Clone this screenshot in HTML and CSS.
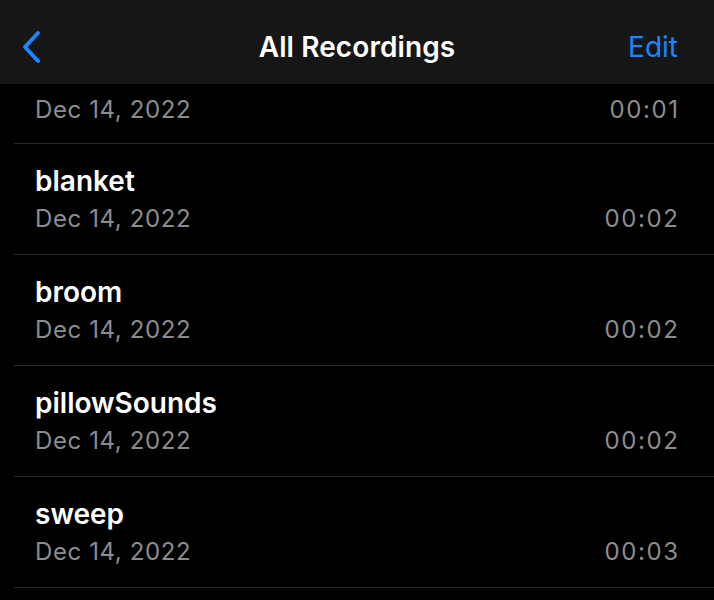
FILE: index.html
```html
<!DOCTYPE html>
<html>
<head>
<meta charset="utf-8">
<link rel="stylesheet" href="styles.css">
</head>
<body>
<div class="screen">
  <header class="navbar">
    <div class="nav-left">
      <svg class="chevron" width="22" height="34" viewBox="0 0 22 34"><path d="M19 3 L6 17 L19 31" fill="none" stroke="#1a86ff" stroke-width="4" stroke-linecap="round" stroke-linejoin="round"/></svg>
    </div>
    <div class="nav-title">All Recordings</div>
    <div class="nav-right">Edit</div>
  </header>
  <ul class="list">
    <li class="row partial">
      <div class="meta"><span class="date">Dec 14, 2022</span><span class="time">00:01</span></div>
    </li>
    <li class="row">
      <div class="name">blanket</div>
      <div class="meta"><span class="date">Dec 14, 2022</span><span class="time">00:02</span></div>
    </li>
    <li class="row">
      <div class="name">broom</div>
      <div class="meta"><span class="date">Dec 14, 2022</span><span class="time">00:02</span></div>
    </li>
    <li class="row">
      <div class="name">pillowSounds</div>
      <div class="meta"><span class="date">Dec 14, 2022</span><span class="time">00:02</span></div>
    </li>
    <li class="row">
      <div class="name">sweep</div>
      <div class="meta"><span class="date">Dec 14, 2022</span><span class="time">00:03</span></div>
    </li>
  </ul>
</div>
</body>
</html>
```
FILE: styles.css
```css
html, body {
  margin: 0;
  padding: 0;
  background: #000;
}
body {
  font-family: Inter, "Liberation Sans", sans-serif;
  color: #fff;
  width: 714px;
  height: 600px;
  overflow: hidden;
}
.navbar {
  box-sizing: border-box;
  height: 84px;
  background: #161616;
  display: grid;
  grid-template-columns: 1fr auto 1fr;
  align-items: center;
  padding: 9px 19px 0;
}
.nav-left {
  display: flex;
  align-items: center;
}
.chevron {
  display: block;
}
.nav-title {
  font-size: 28px;
  font-weight: 600;
  letter-spacing: 0.1px;
}
.nav-right {
  justify-self: end;
  color: #1a86ff;
  font-size: 28px;
  font-weight: 400;
  padding-right: 17px;
}
.list {
  list-style: none;
  margin: 0;
  padding: 0;
}
.row {
  margin-left: 14px;
  padding: 22px 36px 20px 21px;
  border-bottom: 1px solid #2a2a2e;
}
.row.partial {
  padding-top: 11px;
  padding-bottom: 18px;
}
.name {
  font-size: 28px;
  font-weight: 600;
  line-height: 30px;
  margin-bottom: 8px;
}
.meta {
  display: flex;
  justify-content: space-between;
  font-size: 24px;
  line-height: 30px;
  color: #8c8c90;
}
.date {
  letter-spacing: 0.6px;
}
.time {
  letter-spacing: 1.6px;
  margin-right: -1.6px;
}
```
